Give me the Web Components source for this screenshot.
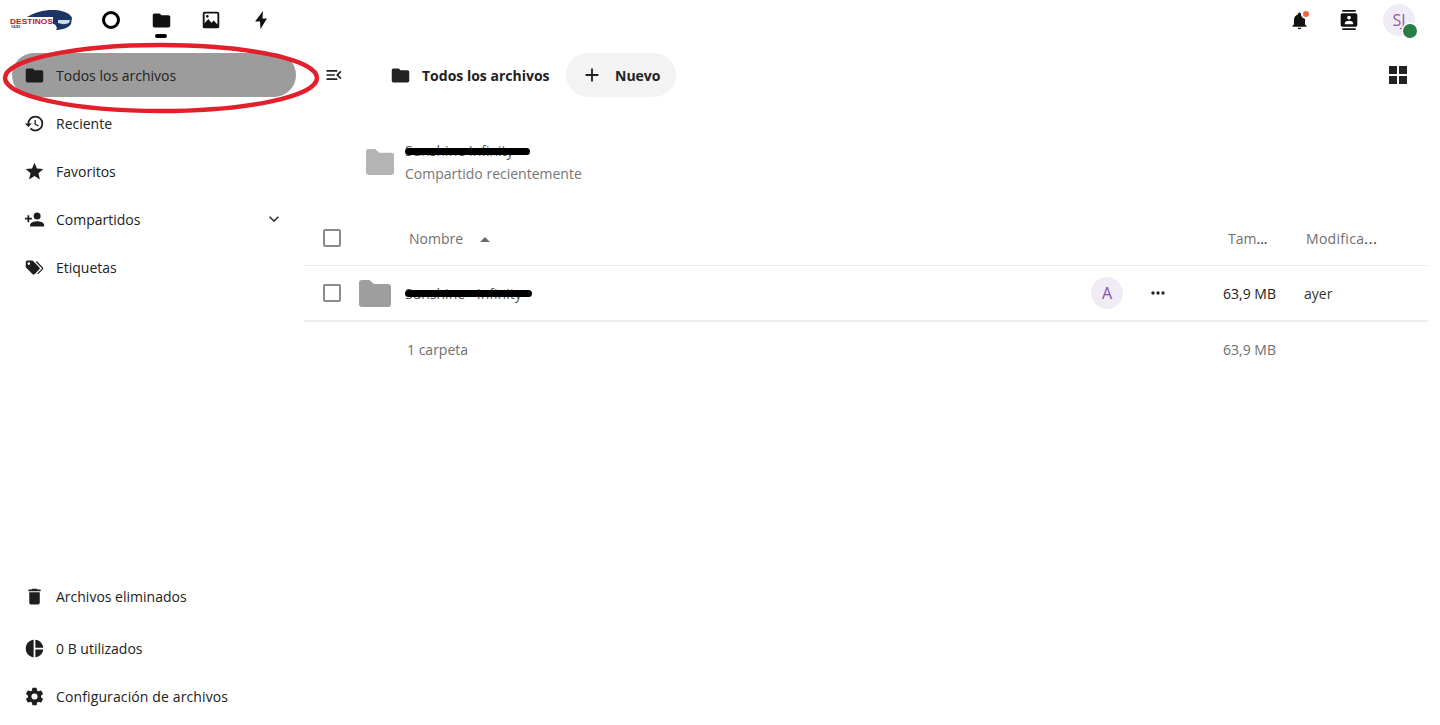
<!DOCTYPE html>
<html lang="es">
<head>
<meta charset="utf-8">
<title>Archivos</title>
<style>
    html, body { margin: 0; height: 725px; overflow: hidden; background: #fff; }
    body { font-family: "Open Sans", sans-serif; font-size: 14px; color: #222; }
</style>
</head>
<body>
<files-app></files-app>

<script>
const ICONS = {
    folder: 'M10,4H4C2.89,4 2,4.89 2,6V18A2,2 0 0,0 4,20H20A2,2 0 0,0 22,18V8C22,6.89 21.1,6 20,6H12L10,4Z',
    history: 'M13.5,8H12V13L16.28,15.54L17,14.33L13.5,12.25V8M13,3A9,9 0 0,0 4,12H1L4.96,16.03L9,12H6A7,7 0 0,1 13,5A7,7 0 0,1 20,12A7,7 0 0,1 13,19C11.07,19 9.32,18.21 8.06,16.94L6.64,18.36C8.27,20 10.5,21 13,21A9,9 0 0,0 22,12A9,9 0 0,0 13,3',
    star: 'M12,17.27L18.18,21L16.54,13.97L22,9.24L14.81,8.62L12,2L9.19,8.62L2,9.24L7.45,13.97L5.82,21L12,17.27Z',
    share: 'M15,14C12.33,14 7,15.33 7,18V20H23V18C23,15.33 17.67,14 15,14M6,10V7H4V10H1V12H4V15H6V12H9V10M15,12A4,4 0 0,0 19,8A4,4 0 0,0 15,4A4,4 0 0,0 11,8A4,4 0 0,0 15,12Z',
    chevron: 'M7.41,8.58L12,13.17L16.59,8.58L18,10L12,16L6,10L7.41,8.58Z',
    tags: 'M5.5,9A1.5,1.5 0 0,0 7,7.5A1.5,1.5 0 0,0 5.5,6A1.5,1.5 0 0,0 4,7.5A1.5,1.5 0 0,0 5.5,9M17.41,11.58C17.77,11.94 18,12.44 18,13C18,13.55 17.78,14.05 17.41,14.41L12.41,19.41C12.05,19.77 11.55,20 11,20C10.45,20 9.95,19.78 9.58,19.41L2.59,12.42C2.22,12.05 2,11.55 2,11V6C2,4.89 2.89,4 4,4H9C9.55,4 10.05,4.22 10.41,4.58L17.41,11.58M13.54,5.71L14.54,4.71L21.41,11.58C21.78,11.94 22,12.45 22,13C22,13.55 21.78,14.05 21.42,14.41L16.04,19.79L15.04,18.79L20.75,13L13.54,5.71Z',
    trash: 'M19,4H15.5L14.5,3H9.5L8.5,4H5V6H19M6,19A2,2 0 0,0 8,21H16A2,2 0 0,0 18,19V7H6V19Z',
    pie: 'M11,2V22C5.9,21.5 2,17.2 2,12C2,6.8 5.9,2.5 11,2M13,2V11H22C21.5,6.2 17.8,2.5 13,2M13,13V22C17.7,21.5 21.5,17.8 22,13H13Z',
    cog: 'M12,15.5A3.5,3.5 0 0,1 8.5,12A3.5,3.5 0 0,1 12,8.5A3.5,3.5 0 0,1 15.5,12A3.5,3.5 0 0,1 12,15.5M19.43,12.97C19.47,12.65 19.5,12.33 19.5,12C19.5,11.67 19.47,11.34 19.43,11L21.54,9.37C21.73,9.22 21.78,8.95 21.66,8.73L19.66,5.27C19.54,5.05 19.27,4.96 19.05,5.05L16.56,6.05C16.04,5.66 15.5,5.32 14.87,5.07L14.5,2.42C14.46,2.18 14.25,2 14,2H10C9.75,2 9.54,2.18 9.5,2.42L9.13,5.07C8.5,5.32 7.96,5.66 7.44,6.05L4.95,5.05C4.73,4.96 4.46,5.05 4.34,5.27L2.34,8.73C2.21,8.95 2.27,9.22 2.46,9.37L4.57,11C4.53,11.34 4.5,11.67 4.5,12C4.5,12.33 4.53,12.65 4.57,12.97L2.46,14.63C2.27,14.78 2.21,15.05 2.34,15.27L4.34,18.73C4.46,18.95 4.73,19.03 4.95,18.95L7.44,17.94C7.96,18.34 8.5,18.68 9.13,18.93L9.5,21.58C9.54,21.82 9.75,22 10,22H14C14.25,22 14.46,21.82 14.5,21.58L14.87,18.93C15.5,18.67 16.04,18.34 16.56,17.94L19.05,18.95C19.27,19.03 19.54,18.95 19.66,18.73L21.66,15.27C21.78,15.05 21.73,14.78 21.54,14.63L19.43,12.97Z',
    menuOpen: 'M21,15.61L19.59,17L14.58,12L19.59,7L21,8.39L17.44,12L21,15.61M3,6H16V8H3V6M3,13V11H13V13H3M3,18V16H16V18H3Z',
    bell: 'M21,19V20H3V19L5,17V11C5,7.9 7.03,5.17 10,4.29C10,4.19 10,4.1 10,4A2,2 0 0,1 12,2A2,2 0 0,1 14,4C14,4.1 14,4.19 14,4.29C16.97,5.17 19,7.9 19,11V17L21,19M14,21A2,2 0 0,1 12,23A2,2 0 0,1 10,21',
    contacts: 'M20,0H4V2H20V0M4,24H20V22H4V24M20,4H4A2,2 0 0,0 2,6V18A2,2 0 0,0 4,20H20A2,2 0 0,0 22,18V6A2,2 0 0,0 20,4M12,6.75A2.25,2.25 0 0,1 14.25,9A2.25,2.25 0 0,1 12,11.25A2.25,2.25 0 0,1 9.75,9A2.25,2.25 0 0,1 12,6.75M17,17H7V15.5C7,13.83 10.33,13 12,13C13.67,13 17,13.83 17,15.5V17Z',
    grid: 'M3,11H11V3H3M3,21H11V13H3M13,21H21V13H13M13,3V11H21V3',
    image: 'M3,5A2,2 0 0,1 5,3H19A2,2 0 0,1 21,5V19A2,2 0 0,1 19,21H5A2,2 0 0,1 3,19V5M5,5V15.5L9,11L12.5,15L15,12.5L19,17V5H5M8,6.5A1.5,1.5 0 0,1 9.5,8A1.5,1.5 0 0,1 8,9.5A1.5,1.5 0 0,1 6.5,8A1.5,1.5 0 0,1 8,6.5Z',
    flash: 'M14.2,2.2L5.5,13.6H10.9L11.5,21.8L18.5,10.4H13.6Z',
    plus: 'M19,13H13V19H11V13H5V11H11V5H13V11H19V13Z',
    dots: 'M16,12A2,2 0 0,1 18,10A2,2 0 0,1 20,12A2,2 0 0,1 18,14A2,2 0 0,1 16,12M10,12A2,2 0 0,1 12,10A2,2 0 0,1 14,12A2,2 0 0,1 12,14A2,2 0 0,1 10,12M4,12A2,2 0 0,1 6,10A2,2 0 0,1 8,12A2,2 0 0,1 6,14A2,2 0 0,1 4,12Z',
    caret: 'M7,15L12,10L17,15H7Z'
}

class MdiIcon extends HTMLElement {
    constructor() {
        super()
        const size = this.getAttribute('size') || 22
        this.attachShadow({ mode: 'open' }).innerHTML = `
        <style>
            :host { display: inline-flex; width: ${size}px; height: ${size}px; color: inherit; flex: none; }
            svg { width: 100%; height: 100%; display: block; fill: currentColor; }
        </style>
        <svg viewBox="0 0 24 24"><path d="${ICONS[this.getAttribute('name')]}"/></svg>`
    }
}

class FolderIcon extends HTMLElement {
    constructor() {
        super()
        this.attachShadow({ mode: 'open' }).innerHTML = `
        <style>
            :host { display: block; width: var(--w, 32px); height: var(--h, 27px); flex: none; }
            svg { width: 100%; height: 100%; display: block; fill: var(--folder, #9e9e9e); }
        </style>
        <svg viewBox="0 0 32 27" preserveAspectRatio="none"><path d="M3,0H10.5L15,4H29A3,3 0 0,1 32,7V24A3,3 0 0,1 29,27H3A3,3 0 0,1 0,24V3A3,3 0 0,1 3,0Z"/></svg>`
    }
}

class HeaderItem extends HTMLElement {
    constructor() {
        super()
        this.attachShadow({ mode: 'open' }).innerHTML = `
        <style>
            :host { display: flex; position: relative; width: 50px; height: 40px; align-items: center; justify-content: center; color: #111; }
            :host([active])::after {
                content: ''; position: absolute; left: 19px; top: 34px;
                width: 12px; height: 4px; border-radius: 2px; background: #000;
            }
        </style>
        <slot></slot>`
    }
}

class AppHeader extends HTMLElement {
    constructor() {
        super()
        this.attachShadow({ mode: 'open' }).innerHTML = `
        <style>
            :host { display: flex; height: 50px; box-sizing: border-box; padding: 0 16px 10px 10px; align-items: center; }
            .logo { width: 62px; height: 22px; margin-right: 14px; display: block; }
            .logo text { font-family: "Liberation Sans", sans-serif; font-weight: 700; font-size: 8px; fill: #c8141c; }
            .logo .sub { font-size: 2.6px; fill: #1b3564; }
            .apps { display: flex; }
            .right { display: flex; margin-left: auto; }
            .ring { width: 12px; height: 12px; border: 3.5px solid #000; border-radius: 50%; }
            .bell { position: relative; display: flex; }
            .bell i {
                position: absolute; right: 0; top: 0; width: 6px; height: 6px; border-radius: 50%;
                background: #f4623a; box-shadow: 0 0 0 2px #fff;
            }
            .avatar {
                position: relative; width: 32px; height: 32px; border-radius: 50%; background: #f0ebf5;
                color: #8b5ea8; font-size: 16px; line-height: 32px; text-align: center;
            }
            .avatar i {
                position: absolute; left: 20px; top: 20px; width: 14px; height: 14px; border-radius: 50%;
                background: #2a7d46; box-shadow: 0 0 0 1.5px #fff;
            }
        </style>
        <svg class="logo" viewBox="0 0 62 22">
            <path fill="#1b3564" d="M15,9C25,3 35,.5 45,1C54,1.5 61,5 62,9L61,15C59,18 55,20.5 46,21C48,19 46,16 44,15H15Z"/>
            <path fill="#cfdbe8" d="M48,11H60L59,14C56,15.5 52,15.5 48,14Z"/>
            <rect x="0" y="8" width="43" height="7.5" fill="#fff"/>
            <text x="0" y="14.5" textLength="43" lengthAdjust="spacingAndGlyphs">DESTINOS</text>
            <text class="sub" x="1" y="18.5">VIAJES</text>
        </svg>
        <div class="apps">
            <header-item><div class="ring"></div></header-item>
            <header-item active><mdi-icon name="folder" size="21"></mdi-icon></header-item>
            <header-item><mdi-icon name="image" size="22"></mdi-icon></header-item>
            <header-item><mdi-icon name="flash" size="22"></mdi-icon></header-item>
        </div>
        <div class="right">
            <header-item><span class="bell"><mdi-icon name="bell" size="19"></mdi-icon><i></i></span></header-item>
            <header-item><mdi-icon name="contacts" size="20"></mdi-icon></header-item>
            <header-item><div class="avatar">SJ<i></i></div></header-item>
        </div>`
    }
}

class NavItem extends HTMLElement {
    constructor() {
        super()
        const expand = this.hasAttribute('expand') ? '<mdi-icon class="chev" name="chevron" size="20"></mdi-icon>' : ''
        this.attachShadow({ mode: 'open' }).innerHTML = `
        <style>
            :host { display: block; padding: 2px 4px 2px 12px; color: #222; }
            .pill { display: flex; align-items: center; height: 44px; border-radius: 22px; }
            :host([active]) .pill { background: #9c9c9c; }
            .ic { width: 44px; display: flex; justify-content: center; color: #1e1e1e; }
            .chev { margin-left: auto; margin-right: 12px; color: #333; }
        </style>
        <div class="pill">
            <span class="ic"><mdi-icon name="${this.getAttribute('icon')}" size="${this.getAttribute('size') || 21}"></mdi-icon></span>
            <slot></slot>
            ${expand}
        </div>`
    }
}

class FilesSidebar extends HTMLElement {
    constructor() {
        super()
        this.attachShadow({ mode: 'open' }).innerHTML = `
        <style>
            :host { display: flex; flex-direction: column; width: 300px; flex: none; box-sizing: border-box; padding: 1px 0 5px; }
            .bottom { margin-top: auto; display: flex; flex-direction: column; }
            .gap { height: 4px; }
        </style>
        <nav-item icon="folder" active>Todos los archivos</nav-item>
        <nav-item icon="history">Reciente</nav-item>
        <nav-item icon="star">Favoritos</nav-item>
        <nav-item icon="share" expand>Compartidos</nav-item>
        <nav-item icon="tags">Etiquetas</nav-item>
        <div class="bottom">
            <nav-item icon="trash">Archivos eliminados</nav-item>
            <div class="gap"></div>
            <nav-item icon="pie">0 B utilizados</nav-item>
            <nav-item icon="cog" style="letter-spacing:.12px">Configuración de archivos</nav-item>
        </div>`
    }
}

class FilesToolbar extends HTMLElement {
    constructor() {
        super()
        this.attachShadow({ mode: 'open' }).innerHTML = `
        <style>
            :host { display: flex; align-items: center; height: 44px; padding: 3px 20px 0 12px; color: #222; }
            .btn { width: 44px; height: 44px; display: flex; align-items: center; justify-content: center; flex: none; }
            .crumb { margin-left: 22px; }
            b { font-weight: 700; width: 128px; white-space: nowrap; }
            .new {
                display: flex; align-items: center; height: 44px; width: 110px; margin-left: 16px; box-sizing: border-box;
                border-radius: 22px; background: #f3f3f3; padding-left: 15px; gap: 12px;
            }
            .new b { width: auto; }
            .grid { margin-left: auto; }
        </style>
        <div class="btn"><mdi-icon name="menuOpen" size="20"></mdi-icon></div>
        <div class="btn crumb"><mdi-icon name="folder" size="21"></mdi-icon></div>
        <b>Todos los archivos</b>
        <div class="new"><mdi-icon name="plus" size="22"></mdi-icon><b>Nuevo</b></div>
        <div class="btn grid"><mdi-icon name="grid" size="24"></mdi-icon></div>`
    }
}

// black marker line drawn over a name in the screenshot
class RedactLine extends HTMLElement {
    constructor() {
        super()
        this.attachShadow({ mode: 'open' }).innerHTML = `
        <style>
            :host {
                display: block; position: absolute; left: 0; top: 50%; height: 7px; margin-top: -3px;
                border-radius: 4px; background: #000; width: var(--len, 125px);
            }
        </style>`
    }
}

class RecentFile extends HTMLElement {
    constructor() {
        super()
        this.attachShadow({ mode: 'open' }).innerHTML = `
        <style>
            :host { display: flex; margin: 42px 0 0 66px; height: 46px; align-items: center; gap: 11px; }
            folder-icon { --w: 28px; --h: 26px; --folder: #b4b4b4; }
            .lines { line-height: 23px; }
            .title { position: relative; color: #555; }
            .sub { color: #767676; }
        </style>
        <folder-icon></folder-icon>
        <div class="lines">
            <div class="title">Sunshine Infinity<redact-line style="--len:125px"></redact-line></div>
            <div class="sub">Compartido recientemente</div>
        </div>`
    }
}

const ROW_STYLE = `
    :host {
        display: grid; grid-template-columns: 55px 46px 1fr 80px 28px 124px; align-items: center;
        box-sizing: border-box;
    }
    .size { text-align: right; white-space: nowrap; }
    .box { width: 14px; height: 14px; border: 2px solid #8a8a8a; border-radius: 2px; margin-left: 19px; }
`

class TableHead extends HTMLElement {
    constructor() {
        super()
        this.attachShadow({ mode: 'open' }).innerHTML = `
        <style>
            ${ROW_STYLE}
            :host { height: 53px; padding-bottom: 1px; margin-top: 28px; border-bottom: 1px solid #ededed; color: #6f6f6f; }
            .box { margin-top: -1px; }
            .name { grid-column: 3; display: flex; align-items: center; margin-left: 4px; gap: 10px; }
            .name mdi-icon { color: #6b6b6b; }
            .dot { color: #222; }
            .size { grid-column: 4; margin-left: 32px; text-align: left; }
            .mod { grid-column: 6; margin-left: 2px; white-space: nowrap; letter-spacing: .3px; }
            .mod .dot { letter-spacing: .8px; }
        </style>
        <div class="box"></div>
        <div class="name">Nombre <mdi-icon name="caret" size="24"></mdi-icon></div>
        <div class="size">Tam<span class="dot">...</span></div>
        <div class="mod">Modifica<span class="dot">...</span></div>`
    }
}

class FileRow extends HTMLElement {
    constructor() {
        super()
        this.attachShadow({ mode: 'open' }).innerHTML = `
        <style>
            ${ROW_STYLE}
            :host { height: 56px; border-bottom: 2px solid #ededed; color: #222; }
            .name { position: relative; color: #555; }
            .share {
                display: flex; align-items: center; justify-content: flex-end; padding-right: 16px;
            }
            .title { position: relative; margin-right: auto; }
            .av {
                width: 32px; height: 32px; border-radius: 50%; background: #f0ebf5; color: #8b4ea8;
                font-size: 16px; line-height: 32px; text-align: center;
            }
            .more { width: 44px; margin-left: 13px; display: flex; justify-content: center; }
            .when { color: #333; }
        </style>
        <div class="box"></div>
        <folder-icon></folder-icon>
        <div class="share">
            <div class="title name">Sunshine - Infinity<redact-line style="--len:127px"></redact-line></div>
            <div class="av">A</div>
            <div class="more"><mdi-icon name="dots" size="20"></mdi-icon></div>
        </div>
        <div class="size">63,9 MB</div>
        <div></div>
        <div class="when">ayer</div>`
    }
}

class TableFoot extends HTMLElement {
    constructor() {
        super()
        this.attachShadow({ mode: 'open' }).innerHTML = `
        <style>
            ${ROW_STYLE}
            :host { height: 55px; color: #6f6f6f; }
            .count { grid-column: 3; margin-left: 2px; }
            .size { grid-column: 4; }
        </style>
        <div class="count">1 carpeta</div>
        <div class="size">63,9 MB</div>`
    }
}

class FilesContent extends HTMLElement {
    constructor() {
        super()
        this.attachShadow({ mode: 'open' }).innerHTML = `
        <style>
            :host { display: block; flex: 1; min-width: 0; }
            .table { margin: 0 12px 0 4px; }
        </style>
        <files-toolbar></files-toolbar>
        <recent-file></recent-file>
        <div class="table">
            <table-head></table-head>
            <file-row></file-row>
            <table-foot></table-foot>
        </div>`
    }
}

class FilesApp extends HTMLElement {
    constructor() {
        super()
        this.attachShadow({ mode: 'open' }).innerHTML = `
        <style>
            :host { display: block; position: relative; height: 725px; overflow: hidden; }
            .main { display: flex; height: 675px; }
            .mark { position: absolute; left: 0; top: 38px; width: 326px; height: 80px; pointer-events: none; }
        </style>
        <app-header></app-header>
        <div class="main">
            <files-sidebar></files-sidebar>
            <files-content></files-content>
        </div>
        <svg class="mark" viewBox="0 0 326 80">
            <ellipse cx="161" cy="40" rx="156" ry="33" fill="none" stroke="#e21f2b" stroke-width="4.5"/>
        </svg>`
    }
}

window.customElements.define('mdi-icon', MdiIcon)
window.customElements.define('folder-icon', FolderIcon)
window.customElements.define('header-item', HeaderItem)
window.customElements.define('app-header', AppHeader)
window.customElements.define('nav-item', NavItem)
window.customElements.define('files-sidebar', FilesSidebar)
window.customElements.define('files-toolbar', FilesToolbar)
window.customElements.define('redact-line', RedactLine)
window.customElements.define('recent-file', RecentFile)
window.customElements.define('table-head', TableHead)
window.customElements.define('file-row', FileRow)
window.customElements.define('table-foot', TableFoot)
window.customElements.define('files-content', FilesContent)
window.customElements.define('files-app', FilesApp)
</script>
</body>
</html>
